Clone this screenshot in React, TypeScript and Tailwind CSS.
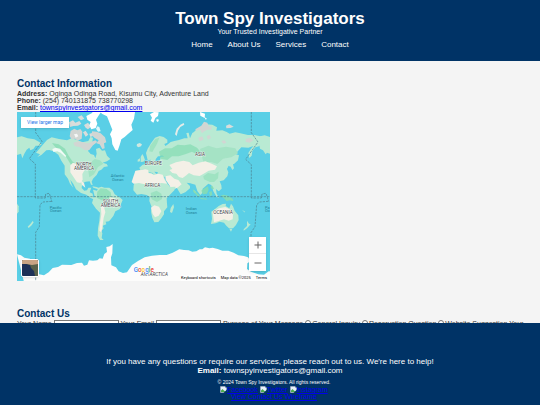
import React from 'react';

const navItems = ['Home', 'About Us', 'Services', 'Contact'];
const purposes = ['General Inquiry', 'Reservation Question', 'Website Suggestion'];
const socials = ['Facebook', 'Twitter', 'Instagram'];

const Header = () => (
  <header className="bg-[#003366] px-4 pt-[9px] pb-[11px] text-center text-white">
    <h1 className="text-[17px] leading-[19px] font-bold">Town Spy Investigators</h1>
    <p className="text-[7px] leading-[8px]">Your Trusted Investigative Partner</p>
    <nav className="mt-1 flex justify-center gap-[15px] text-[8px] leading-[10px]">
      {navItems.map((item) => (
        <a key={item} href="#">
          {item}
        </a>
      ))}
    </nav>
  </header>
);

const WorldMap = () => (
  <svg viewBox="0 0 759 507" className="block w-full" role="img" aria-label="World map">
    <rect width="759" height="507" fill="#5acfe6" />

    {/* North America, Greenland and the eastern tip of Russia */}
    <g transform="translate(-21 -21)">
      <path fill="#b9ead3" d="M21 97l14-3 18 6 20 3 16 9 6 7-9 3-9 0-7 10-9 4-3-8-8 6-7 12-6 14-4-14-12 4z" />
      <path fill="#b9ead3" d="M21 326l0-30 5 8 0 16z" />
      <path
        fill="#b9ead3"
        d="M103 114l8-9 14-8 22 5 24 4 14-6 14 4 18 8 18-4 6-12 8 2-2 12 8 4-13 10-8 14 8 9 10 3 4 10 4-14-2-14 10-4 8 9 9-1 6 16 10 10-10 7-13 4 12 4 4 7-12 2-8 8-8 4-6 12-11 11-4 9 3 10-5-1-4-10-12 1-10 5-2 14 8 8 8-1 4-8 9 0-5 14 9 4 1 10 10 5-4 4-14-7-12-9-16-5-15-11-8-16-9-13 4 14 5 10-10-12-6-15-10-13 0-26-10-15-9-18-14-10-13-4-9 1-15 14-12 6 8-8-12-5z"
      />
      <path fill="#85dbb2" d="M126 114l20 4 19 13 10 20 12 18 14 10-7 10-12-11-12-20-16-20-16-9z" opacity=".75" />
      <path fill="#85dbb2" d="M240 174l14-12 16 4 10 10-16 10-12 22-14 9-3-20z" opacity=".45" />
      <path fill="#f4f0e7" d="M181 181l8-8 15 5 18 0 3 15-8 14 1 17-7 10-10-2-12-18-8-12z" />
      <path fill="#f4f0e7" d="M212 226l10 8 4 14-10-8z" />
      <path fill="#d2d6d3" d="M190 113l16-4 28 6 22-9 6 5-13 10-11 14-13 1-14-9-17-4z" />
      <path fill="#fff" d="M127 132l10-4 13 3 8 9 11 13-3 3-14-13-10-4-12 2z" opacity=".8" />
      <path fill="#d2d6d3" d="M182 78l11-7 9 5 9-4 6 8-2 21-12 6-8-6-10 2-6-9z" />
      <path fill="#d9dddb" d="M177 52l12-6 7 7 12-5 6 8-10 6-14 1-10 3zM203 36l12-5 8 10-10 5zM222 60l12-7 9 12-9 8-7-5zM219 82l8-5 8 12-8 6zM238 86l9-2 2 9-8 3z" />
      <path fill="#d2d6d3" d="M246 79l14 1 12 5 13 12 4 15-7 3 2 15-7 2-8-14-10-3 7-9-13-8-8-9z" />
      <path fill="#fff" d="M229 33l16-8 3-4 25 0-8 12-7 11 4 12-5 13-13 4-6-12 4-10-10-7z" />
      <path fill="#fff" d="M262 64l6 2 4 13-8 1-6-9zM192 88l9-2 4 8-8 4z" opacity=".8" />
      <path fill="#fff" d="M270 21l105 0-3 20-8 18 4 16-15 13-9 8-10 7-5 17-6 17-7-2-9-17-2-18-5-12 7-14-8-20-8-20-14-7z" />
      <path fill="#cfe8e0" d="M381 117l8-3 7 4-3 6-8 3-5-4z" />
      <path fill="#b9ead3" d="M247 244l13 2 13 6-9 1-14-5zM277 253l9 0 5 4-12 1z" />
    </g>

    {/* South America */}
    <g transform="translate(-21 234)">
      <path
        fill="#b9ead3"
        d="M249-1l12 3 4-9 10-3 8 3 15 0 10 8 6 12 17 10 7 7-5 12-3 15-14 7-6 14-7 9-6 7-10 1 2 8-11 4 3 8-7 8 3 7-2 14 6 6-11 0-7-13 1-22 4-23 2-24-12-12-12-17 3-10 5-10z"
      />
      <path fill="#85dbb2" d="M262 5l10-10 18 2 12 10 2 13-11 10-18 1-15-8z" opacity=".7" />
      <path fill="#f4f0e7" d="M272 41l10 9 4 17-5 16-3 22-4 22-6-5 2-25 4-24z" />
      <path fill="#e5efd9" d="M298 20l17 5 7 10-11 15-10-9z" />
      <path fill="#b9ead3" d="M53 110l8-8 7-9 3 4-6 9-9 8z" />
    </g>

    {/* Europe and Asia */}
    <g transform="translate(369 -21)">
      <path
        fill="#b9ead3"
        d="M18 144l5-13 10-16 12-17 14-5 12 3 11 8 0 9-9 4 3 6 8-5 8-7 11-3 14-3 16-5 10 0-4-16 7-1 4 17 7-16 5-3 8-8 14-7 15-8 18 1 14 8-2 10 18-1 13 5 9 5 17-4 15 3 23 5 19 0 18 4 15 7 8 7-11 5-7 1-9 10-11 3-9 11-2 14-7 7-3-15 7-11 8-10-15 5-21-1-10 11-8 9 11 4-3 15-11 10-4 2 3 12-5 5-5-10-7-3-4 10 4 10-3 12-11 12-12 3 5 12 1 10-9 8-8-7 2 14 7 13-7-3-10-17-6-19-9-4-11 10-6 5-1 13-6 6-9-12-6-19-15-4-11-2 10 10 0 7-14 12-14 6-6-10-10-17-5-8 4-11-12 1-13-2-4-7-8 6-8-8-8-11-9-1 9 11 2 8-8-3-8-12-10-2-11 7-6 6-14 0-1-15 14-1 2-7-7-7 11-5 9-7 8-1-1-9 5 8 13-2 10-4 2-9 11-1-7-4-7 3-5 0-6 7-4 11-6 5-6-13-9 2z"
      />
      <path fill="#85dbb2" d="M57 140l18-10 20 0 18-11 20 2 18-3 20 10 14 17-11 4-18-9-18 7-22 7-20 0-14 11-20-4z" opacity=".7" />
      <path fill="#85dbb2" d="M30 123l16-21 12-4-7 18-14 25-9-2z" opacity=".5" />
      <path fill="#a5e3c5" d="M180 132l25-10 25 8 28-5 28 5 8 15-20 12-25 4-17 16-18-6-24 0z" />
      <path fill="#85dbb2" d="M190 214l14-10 20 4 12-8-2 20-12 11-12 0-18-8z" opacity=".5" />
      <path fill="#f4f0e7" d="M88 180l20-8 22-5 18 4 10 10 18-8 20-4 19 7 16 8-6 10-19 3-15 9-12 7-18-2-14-7-7 6-12 9-11-3-8-10-12-2-9-9 9-3z" />
      <path fill="#f4f0e7" d="M76 214l15-3 12 10 12 4 10 13-13 10-16 7-8-14-11-17z" />
      <path fill="#d2d6d3" d="M166 73l10-6 8-5 8-12 10 3 5 12 8-2-1 11-12 0-9 5-7 6-6-11-12 3zM175 98l12-4 4 10-13 5zM200 94l8-5 5 9-9 6zM317 102l13-4 10 8-11 7-12-3zM244 108l10-2 5 7-9 3z" />
      <path fill="#e4ece9" d="M105 88l5-17 11-12 10-5 2 5-12 7-7 11-4 16z" />
      <path fill="#fff" d="M30 28l12-7 14 1-2 11-8 6-6 14-8-6 4-9zM50 42l7 2-3 7-5-3zM180 21l15 5-1 13-13-7zM193 37l7 3-2 5z" />
      <path fill="#d9dddb" d="M258 62l10-4 13 7-10 4-12 1z" />
      <path fill="#b9ead3" d="M360 94l14-3 16 5 0 50-9-3-4 5-8-12-9-5-2-10 8-11-7-8z" />
      <path fill="#b9ead3" d="M2 156l5-9 4 7 4 11-5 5-8 1zM-7 164l7-4 0 9-7 1z" />
      <path fill="#b9ead3" d="M259 174l7 6-2 7-6 2-4 13-10 7-7-1 12-9 6-13zM255 157l3 11 2 10-5-5zM230 224l3 0 0 8-3-1zM230 237l6 4 4 14-4 2-6-10zM163 256l5 4-2 5-4-3z" />
      <path fill="#b9ead3" d="M-2 188l10-9 12-2 2 7-9 9-12 3z" />
    </g>

    {/* Africa, the islands and Oceania */}
    <g transform="translate(369 234)">
      <path
        fill="#b9ead3"
        d="M-14-58l14-2 17-3 10 2-1 9 10 2 7 4 11-4 15 2 6 16 8 14 8 9 16-1-4 11-14 14-9 10 1 16 1 11-10 12 0 9-8 12-9 11-12 1-6-13-4-19 2-14-7-18 1-12-9-6-16-3-13 2-11-13 1-15 5-14z"
      />
      <path fill="#f4f0e7" d="M-14-57l13-2 17-3 9 2 0 9 10 2 7 4 12-4 14 3 5 14 8 13-16-2-18 3-16-4-17 5-17-4-16 2-6-5 5-16z" />
      <path fill="#f4f0e7" d="M33 53l10-7 14 4 7 14-8 13-11 5-7-10z" />
      <path fill="#85dbb2" d="M32 9l18-7 14 9 2 16-15 9-16-8z" opacity=".55" />
      <path fill="#b9ead3" d="M92 54l8-12 2 9-6 18-6-3z" />
      <path
        fill="#b9ead3"
        d="M214 65l12-9 10-8 12-6 10-1-1 7 11 7 5-14 6 8 5 13 11 14 1 14-8 15-9 10-12 0-8-8-7-9-13-3-12 5-14 2 3-16z"
      />
      <path fill="#f4f0e7" d="M218 66l19-11 19-4 15 8 8 16-1 13-12 4-14-4-16 5-14 4z" />
      <path fill="#85dbb2" d="M158-3l8 6 14 15-5 2-15-14zM184 2l9-7 11-6 2 10-5 12-12 2zM207 7l8-4 2 12-7 4zM242 17l8-3 14 3 14 9 2 7-12-2-8 3-8-9zM181 23l20 3-1 3-19-2zM211-10l6-3 5 9-6 2z" opacity=".9" />
      <path fill="#b9ead3" d="M268 116l9 0-4 9zM321 92l6 9 5 2-11 12-10 7 0-4 10-10zM306 59l10 7-3 1z" />
    </g>

    {/* Antarctica */}
    <path
      fill="#fcfcfb"
      d="M0 427l12 3 10 7 17 3 10 12 6 17 8 17 18 4 14-9 12-13 16-3 12-7 28 1 17-6 15-1 6 9 10-3 5-13 12 1 13-1 7-6 9 1 5-14 8-6-2-15 10-2 9-7-1 28-4 12 1 24 14 6 8 12 13 5 12-2 15-22 18-12 20-11 22-5 23-2 21 0 18-7 20-10 14 2 14 1 11 4 12-1 10-6 8 0 8-6 13 3 10-2 15 4 14 5 18 0 16 6 14 8 17 2 12 4 8 11-10 7-1 17 12 8 22 8 17 1 14-10 15-2 10-2 0 36-759 0z"
    />

    {/* Date line and equator */}
    <g fill="none" stroke="#4b7f8c" strokeWidth="2" strokeDasharray="7 3">
      <path d="M56 0v62l19 26-38 52 18 16v102h30l1-12 11-2 8 26M104 268l-26 2-9 8-2 66-11 17v146" />
      <path d="M703 0v62l20 28-37 52 17 16v100h30l2-12 12-2 8 24M754 268l-26 2-9 8-5 66-12 18v108" />
      <path d="M0 254h759" />
    </g>

    <g
      fontFamily="Roboto, sans-serif"
      fontSize="14"
      textAnchor="middle"
      fill="#3c4043"
      stroke="#fff"
      strokeWidth="2"
      paintOrder="stroke"
    >
      <text x="201" y="162">NORTH</text>
      <text x="201" y="175">AMERICA</text>
      <text x="281" y="273">SOUTH</text>
      <text x="281" y="286">AMERICA</text>
      <text x="409" y="159">EUROPE</text>
      <text x="406" y="225">AFRICA</text>
      <text x="549" y="131">ASIA</text>
      <text x="618" y="307">OCEANIA</text>
      <text x="412" y="493" fontStyle="italic">ANTARCTICA</text>
    </g>
    <g fontFamily="Roboto, sans-serif" fontSize="12" textAnchor="middle" fill="#1f7f97">
      <text x="302" y="196">Atlantic</text>
      <text x="302" y="207">Ocean</text>
      <text x="116" y="290">Pacific</text>
      <text x="116" y="301">Ocean</text>
      <text x="523" y="294">Indian</text>
      <text x="523" y="305">Ocean</text>
      <text x="751" y="290">Pa</text>
      <text x="751" y="301">Oc</text>
    </g>
    <text
      x="350"
      y="479"
      fontFamily="Roboto, sans-serif"
      fontSize="19"
      fontWeight="500"
      stroke="#fff"
      strokeWidth="3"
      paintOrder="stroke"
    >
      <tspan fill="#4285f4">G</tspan>
      <tspan fill="#ea4335">o</tspan>
      <tspan fill="#fbbc05">o</tspan>
      <tspan fill="#4285f4">g</tspan>
      <tspan fill="#34a853">l</tspan>
      <tspan fill="#ea4335">e</tspan>
    </text>
  </svg>
);

const MapEmbed = () => (
  <div className="relative w-1/2 [font-family:Roboto,sans-serif]">
    <WorldMap />
    <a
      href="#"
      className="absolute top-[5px] left-1 bg-white px-[6px] py-[1px] text-[5px] leading-[9px] text-[#1a73e8] shadow-sm"
    >
      View larger map
    </a>
    <button
      aria-label="Show satellite imagery"
      className="absolute bottom-1 left-1 size-[18px] overflow-hidden rounded-xs border border-white shadow-sm"
    >
      <svg viewBox="0 0 16 16" className="block size-full">
        <rect width="16" height="16" fill="#1d3157" />
        <path d="M0 0h16v16h-3l-1-5-3-3-1-3-4-1-4 0z" fill="#59624a" />
        <path d="M0 0h16v4l-6 1-5-1-5 0z" fill="#c9a483" />
      </svg>
    </button>
    <div className="absolute right-1 bottom-[10px] flex w-[17px] flex-col bg-white text-[#666] shadow-sm">
      <button aria-label="Zoom in" className="flex h-[17px] items-center justify-center border-b border-[#e6e6e6]">
        <svg viewBox="0 0 8 8" className="size-2" stroke="currentColor" fill="none">
          <path d="M4 .5v7M.5 4h7" />
        </svg>
      </button>
      <button aria-label="Zoom out" className="flex h-[17px] items-center justify-center">
        <svg viewBox="0 0 8 8" className="size-2" stroke="currentColor" fill="none">
          <path d="M.5 4h7" />
        </svg>
      </button>
    </div>
    <div className="absolute right-0 bottom-0 flex gap-[5px] bg-white/70 pr-[3px] text-[4px] leading-[6px] text-black">
      <button>Keyboard shortcuts</button>
      <span>Map data ©2025</span>
      <a href="#">Terms</a>
    </div>
  </div>
);

const ContactForm = () => (
  <form className="-mr-2 text-[7px] leading-[8px]">
    <label htmlFor="name">Your Name</label>{' '}
    <input id="name" type="text" className="h-[9px] w-[65px] border border-[#767676] bg-white align-text-top" />{' '}
    <label htmlFor="email">Your Email</label>{' '}
    <input id="email" type="email" className="h-[9px] w-[65px] border border-[#767676] bg-white align-text-top" />{' '}
    <span>Purpose of Your Message</span>{' '}
    {purposes.map((purpose) => (
      <React.Fragment key={purpose}>
        <label>
          <input
            type="radio"
            name="purpose"
            className="mr-px size-[6px] appearance-none rounded-full border border-[#767676] bg-white align-baseline"
          />
          {purpose}
        </label>{' '}
      </React.Fragment>
    ))}
    <label htmlFor="message">Your Message</label>{' '}
    <textarea id="message" className="h-4 w-[70px] border border-[#767676] bg-white align-middle" />{' '}
    <button type="submit">Submit</button>
  </form>
);

// placeholder glyph shown before each social link's name
const PictureIcon = () => (
  <svg viewBox="0 0 14 14" className="size-[7px]" aria-hidden="true">
    <path d="M1 1h9l3 3v9H1z" fill="#e8f0fb" stroke="#b4bcc8" />
    <path d="M2 12V9l3-3 3 3 4 3z" fill="#4caf50" />
    <path d="M7 14l7-7v7z" fill="#003366" />
    <path d="M10 1v3h3z" fill="#8fa6c4" />
  </svg>
);

const Footer = () => (
  <footer className="fixed inset-x-0 bottom-0 bg-[#003366] px-4 pt-[34px] pb-1 text-center text-white">
    <p className="text-[8px] leading-[9px]">
      If you have any questions or require our services, please reach out to us. We're here to help!
    </p>
    <p className="text-[8px] leading-[9px]">
      <strong>Email:</strong> townspyinvestigators@gmail.com
    </p>
    <div className="mt-[3px] pl-2">
      <p className="text-[5px] leading-[8px]">© 2024 Town Spy Investigators. All rights reserved.</p>
      <div className="flex justify-center gap-[2px] text-[7px] leading-[7px] text-[#0000ee]">
        {socials.map((name) => (
          <a key={name} href="#" className="flex items-center underline">
            <PictureIcon />
            {name}
          </a>
        ))}
      </div>
      <a href="#" className="block text-[7px] leading-[8px] text-[#0000ee] underline">
        View Contact Us Wireframe
      </a>
    </div>
  </footer>
);

const App = () => (
  <div className="min-h-screen bg-[#f4f4f4] font-[Liberation_Sans,Arial,sans-serif] text-[#333333]">
    <Header />
    <main className="px-[17px] pt-[17px] pb-4">
      <section>
        <h2 className="text-[10px] leading-[12px] font-bold text-[#003366]">Contact Information</h2>
        <div className="pb-px text-[7px] leading-[7px]">
          <p>
            <strong>Address:</strong> Oginga Odinga Road, Kisumu City, Adventure Land
          </p>
          <p>
            <strong>Phone:</strong> (254) 740131875 738770298
          </p>
          <p>
            <strong>Email:</strong>{' '}
            <a href="mailto:townspyinvestgators@gmail.com" className="text-[#0000ee] underline">
              townspyinvestgators@gmail.com
            </a>
          </p>
        </div>
        <MapEmbed />
      </section>
      <section className="mt-[27px]">
        <h2 className="text-[10px] leading-[12px] font-bold text-[#003366]">Contact Us</h2>
        <ContactForm />
      </section>
    </main>
    <Footer />
  </div>
);

export default App;
